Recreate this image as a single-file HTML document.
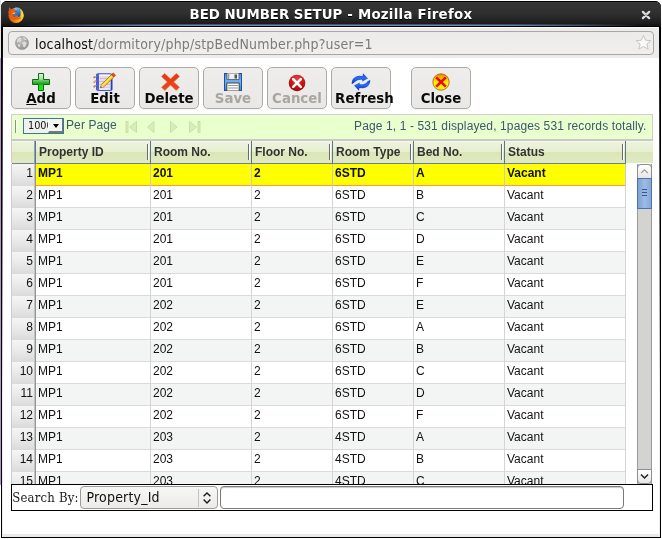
<!DOCTYPE html>
<html><head><meta charset="utf-8"><title>BED NUMBER SETUP</title>
<style>
html,body{margin:0;padding:0;}
body{width:662px;height:539px;overflow:hidden;background:#fff;position:relative;font-family:"Liberation Sans",sans-serif;}
#edgeL{position:absolute;left:0;top:58px;width:1px;height:427px;background:#b68fca;}
#edgeL2{position:absolute;left:0;top:0;width:1px;height:58px;background:#e4e4e4;}
#win{will-change:transform;position:absolute;left:1px;top:1px;width:660px;height:537px;background:#000;border-radius:6px 6px 0 0;}
#title{position:absolute;left:0;top:0;width:660px;height:25px;border-radius:6px 6px 0 0;background:linear-gradient(#000 0,#000 1px,#3e3e3e 1px,#343434 2px,#303030 12px,#272727 17px,#1d1d1d 22px,#151515 25px);color:#fff;font:bold 13.33px "DejaVu Sans","Liberation Sans",sans-serif;line-height:25px;}
#title .t{position:absolute;left:188.5px;top:0.5px;white-space:pre;text-shadow:0 1px 0 #000;}
#tline{position:absolute;left:2px;top:23px;width:656px;height:2px;background:linear-gradient(90deg,rgba(107,141,194,0) 2%,rgba(107,141,194,.55) 12%,rgba(107,141,194,.9) 22%,#6b8dc2 32%,#6b8dc2 68%,rgba(107,141,194,.9) 78%,rgba(107,141,194,.5) 88%,rgba(107,141,194,0) 97%);}
#tline:before{content:"";position:absolute;left:0;top:0;width:656px;height:1px;background:rgba(17,17,17,.45)}
#content{position:absolute;left:2px;top:25px;width:656px;height:508px;background:#fff;overflow:hidden;border-top:0;}
#content:before{content:"";position:absolute;left:0;top:0;width:656px;height:1px;background:#000}
.fr{position:absolute;top:26px;width:1px;height:510px;background:linear-gradient(#000 0%,#f0f0f0 73%,#ececeb 100%);}
#botstrip{position:absolute;left:2px;top:533px;width:656px;height:3px;background:#e9e9e8;}
#nav{position:absolute;left:0;top:1px;width:656px;height:30px;background:#edeceb;border-top:1px solid #fbfbfb;}
#url{position:absolute;left:5px;top:3px;width:644px;height:22px;border:1px solid #a9a7a3;border-radius:4px;background:linear-gradient(#ecebea,#f0efee);font:14px "DejaVu Sans Condensed","DejaVu Sans","Liberation Sans",sans-serif;line-height:22px;color:#7b7b7b;}
#url .u{position:absolute;left:26px;top:0.5px;white-space:pre;letter-spacing:0.19px}
#url b{font-weight:normal;color:#0c0c0c;}
.btn{position:absolute;top:41px;width:58px;height:40px;border:1px solid #adaba7;border-radius:5px;background:linear-gradient(#eeedec,#e9e8e7);font:bold 13.33px "DejaVu Sans","Liberation Sans",sans-serif;text-align:center;color:#0a0a0a;box-shadow:0 1px 0 #f4f4f4;}
.btn span{position:absolute;left:-10px;right:-10px;top:21.5px;line-height:17px;white-space:pre;}
.btn svg{position:absolute;}
.btn.dis{color:#a9a5a1;}
#pager{position:absolute;left:8px;top:88px;width:640px;height:24px;border:1px solid #cfcfcf;border-bottom:none;background:#eaffce;font:12px "Liberation Sans",sans-serif;color:#3a5a6c;}
#pager2{position:absolute;left:8px;top:113px;width:642px;height:2px;background:#c9c9c9;}
#hdr{position:absolute;left:8px;top:115px;width:641px;height:22px;background:linear-gradient(#f6f9ee,#ecf3dc 8%,#e5eece 49%,#dae6b7 50%,#e0eac2);border-left:1px solid #ccc;box-sizing:content-box;font:bold 12px "Liberation Sans",sans-serif;color:#333;}
#hdr span{position:absolute;top:3.5px;white-space:pre;}
#hdr u{position:absolute;left:0;top:22px;width:614px;height:1px;background:#6f8294}
#hdr i{position:absolute;top:0;width:1px;height:23px;background:#5f7489;}
#hdr em{position:absolute;top:3px;width:1px;height:16px;background:#6b6b6b;border-right:1px solid #fff;}
#body{position:absolute;left:8px;top:138px;width:642px;height:320px;overflow:hidden;font:12px "Liberation Sans",sans-serif;color:#111;border-left:1px solid #ccc;}
.row{position:absolute;left:0;width:613px;height:21px;border-bottom:1px solid #dadada;background:#fff;line-height:19px;}
.row.alt{background:#f2f5f3;}
.row.sel{background:#ff0;font-weight:bold;border-bottom:1px solid #ff9a3c;}
.row span{position:absolute;top:0;height:22px;white-space:pre;}
.row .n{left:0;width:21px;height:22px;padding-right:1px;text-align:right;background:linear-gradient(#f5f5f5,#ebebeb 45%,#dadada);border-right:1px solid #c2c2c2;font-weight:normal;}
.row .n:after{content:"";position:absolute;right:-2px;top:0;width:1px;height:22px;background:#959595}
.c{border-left:1px solid #d5d5d5;padding-left:2px;}
.sel .c{border-left-color:#c9c9c9}
.row .c1{left:24px;border-left:none;padding-left:2px}.c2{left:138px}.c3{left:239px}.c4{left:320px}.c5{left:401px}.c6{left:492px}.c7{left:613px;width:0;padding:0}
#sb{position:absolute;left:634px;top:138px;width:15px;height:320px;background:#d3d3d2;border-left:1px solid #9a9a9a;border-right:1px solid #9a9a9a;box-sizing:border-box;}
#sbu,#sbd{position:absolute;left:-1px;width:13px;height:13px;border:1px solid #8d8d8d;background:linear-gradient(#fff,#e6e6e6);}
#sbu{top:0;border-radius:4px 4px 0 0;}
#sbd{bottom:0;border-radius:0 0 4px 4px;}
#sbt{position:absolute;left:-1px;top:14px;width:13px;height:29px;border:1px solid #4d72a8;background:linear-gradient(90deg,#7da2d6,#9dbbe4 50%,#86a9da);}
#sbt i{position:absolute;left:4px;width:5px;height:1px;background:#35588f;}
#search{position:absolute;left:8px;top:458px;width:640px;height:25px;border:1px solid #000;background:#fff;letter-spacing:.2px;font:13px "DejaVu Serif Condensed","DejaVu Serif","Liberation Serif",serif;color:#1a1a1a;}
#sel2{position:absolute;left:68px;top:1px;width:136px;height:21px;border:1px solid #9c9a96;border-radius:4px;background:linear-gradient(#f7f7f6,#ecebea);font:14px "DejaVu Sans Condensed","DejaVu Sans","Liberation Sans",sans-serif;letter-spacing:.18px;color:#111;line-height:21px;}
#inp{position:absolute;left:208px;top:1px;width:402px;height:21px;border:1px solid #7c7a76;box-shadow:inset 0 1px 1px #c8c8c8;border-radius:4px;background:#fff;}
#psel{position:absolute;left:11px;top:3px;width:39px;height:14px;border:1px solid #3d7890;background:#f0f0ef;font:10.8px "DejaVu Sans Condensed","DejaVu Sans","Liberation Sans",sans-serif;color:#111;line-height:14px;overflow:hidden;}
#psel .b{position:absolute;left:24px;top:0;width:13px;height:12px;background:#f4f4f3;border-right:2px solid #777;border-bottom:2px solid #777;border-left:1px solid #fff;}
#psel .b:after{content:"";position:absolute;left:4px;top:5px;border:3.5px solid transparent;border-top:4px solid #000;border-bottom:none;}

</style></head><body>
<div id="edgeL"></div><div id="edgeL2"></div>
<div id="win">
<div id="title"><span class="t">BED NUMBER SETUP<span style="letter-spacing:.27px"> - Mozilla Firefox</span></span>
<svg style="position:absolute;left:7px;top:5.5px" width="17" height="17" viewBox="0 0 17 17">
<defs><linearGradient id="fg" x1="0" y1="0.3" x2="1" y2="0.5"><stop offset="0" stop-color="#cf4a08"/><stop offset="0.4" stop-color="#ea7012"/><stop offset="0.75" stop-color="#f9a41e"/><stop offset="1" stop-color="#ffd038"/></linearGradient>
<linearGradient id="fb" x1="0.2" y1="0" x2="0.8" y2="1"><stop offset="0" stop-color="#9adcf8"/><stop offset="0.4" stop-color="#3a96e0"/><stop offset="1" stop-color="#173a92"/></linearGradient>
<radialGradient id="ft" cx="0.7" cy="0.5" r="0.6"><stop offset="0" stop-color="#ffe048"/><stop offset="1" stop-color="#f9a41e"/></radialGradient></defs>
<circle cx="8" cy="8.4" r="7.6" fill="url(#fg)"/>
<circle cx="9" cy="5.5" r="5" fill="url(#fb)"/>
<path d="M11.2 1.2 C14 2.2 15.7 5.2 15.6 8.6 C15.5 10.6 14.6 12.6 13 14 C13.4 12 13 10.6 12.3 9.6 C12.9 6.8 12.6 3.6 11.2 1.2 Z" fill="url(#ft)"/>
<path d="M1.1 0.4 L3.2 2.3 C4.2 2.6 5.1 2.3 5.6 1.7 L6.1 0.9 L6.7 2.8 L7.7 3.4 L8.7 4.3 L7.7 5 L7.2 5.9 L5.8 6.7 L4.7 7 C5.2 8.2 6.4 8.9 7.7 8.7 L9.5 8.3 L10.3 9.6 L9 10.6 C10.4 10.8 11.6 10.2 12.3 9.4 L12.6 12 L6 13 L1.4 9.6 L0.5 5.4 C0.9 4 1 2 1.1 0.4 Z" fill="#e4640e"/>
<path d="M0.6 5.2 C1 4 1.05 2 1.1 0.4 L3.2 2.3 L2.6 6.4 L1.4 9 Z" fill="#d9560a"/>
<path d="M7.6 3.5 L8.8 4.3 L7.8 5.1 Z" fill="#6a1604"/>
<path d="M4.6 5.9 L7.1 5.4 L6.7 6.4 L4.9 6.9 Z" fill="#ffdcae"/>
<path d="M4.4 7.2 C5 8.4 6.2 9.2 7.6 9 L6.4 9.8 C5.2 9.4 4.4 8.4 4.4 7.2 Z" fill="#a83404"/>
</svg>
<svg style="position:absolute;left:639.8px;top:8.9px" width="10" height="10" viewBox="0 0 10 10"><path d="M1.9 1.9 L8.1 8.1 M8.1 1.9 L1.9 8.1" stroke="#dcdcdc" stroke-width="2.3" stroke-linecap="round"/><circle cx="5" cy="5" r="1.2" fill="#b4b4b4"/></svg>
</div>
<div id="tline"></div>
<div id="content">
<div id="nav"><div id="url"><svg style="position:absolute;left:6px;top:4px" width="14" height="14" viewBox="0 0 14 14">
<defs><radialGradient id="gg" cx="0.4" cy="0.3" r="0.8"><stop offset="0" stop-color="#c4c4c4"/><stop offset="1" stop-color="#8e8e8e"/></radialGradient></defs>
<circle cx="7" cy="7" r="6.6" fill="url(#gg)" stroke="#9a9a9a" stroke-width=".6"/>
<path d="M3.2 2.2 C4.6 1.4 6 1.6 6.8 2.4 L5.6 3.8 L6.4 5 L5 6.2 L3.6 5.6 L2 6.4 C1.8 4.6 2.2 3.2 3.2 2.2 Z M7.8 1.2 C9.6 1.4 11 2.4 11.8 3.8 L10.4 4.2 L9 3.2 Z M7.2 6.4 L9.6 5.6 L11.6 6.6 L11.2 9 L9.4 11.4 L8 10.6 L8.2 8.6 L6.8 7.6 Z M3 8 L4.8 8.6 L5.2 10.6 L4 11.2 C3.2 10.4 2.8 9.2 3 8 Z" fill="#dcdcdc"/>
</svg><span class="u"><b>localhost</b>/dormitory/php/stpBedNumber.php?user=1</span><svg style="position:absolute;left:625.5px;top:2.1px" width="17" height="17" viewBox="0 0 17 17"><path d="M8.5 1.4 L10.6 6.2 L15.8 6.7 L11.9 10.1 L13.1 15.2 L8.5 12.5 L3.9 15.2 L5.1 10.1 L1.2 6.7 L6.4 6.2 Z" fill="#f9f9f9" stroke="#c6c5c3" stroke-width="1" stroke-linejoin="round"/></svg></div></div>
<div class="btn" style="left:8px"><svg style="left:20px;top:5px" width="18" height="18" viewBox="0 0 18 18">
<defs><linearGradient id="ga" x1="0" y1="0" x2="0" y2="1"><stop offset="0" stop-color="#e4f2e4"/><stop offset="0.33" stop-color="#a8dca8"/><stop offset="0.4" stop-color="#6ccc6c"/><stop offset="0.62" stop-color="#1a9a1a"/><stop offset="0.7" stop-color="#22d822"/><stop offset="1" stop-color="#12ee12"/></linearGradient></defs>
<path d="M6.5 0.5 H11.5 V6.5 H17.5 V11.5 H11.5 V17.5 H6.5 V11.5 H0.5 V6.5 H6.5 Z" fill="url(#ga)" stroke="#0a6e0a" stroke-width="1" stroke-linejoin="round"/>
</svg><span><u>A</u>dd</span></div>
<div class="btn" style="left:72px"><svg style="left:17px;top:4px" width="24" height="20" viewBox="0 0 24 20">
<rect x="3.5" y="1.8" width="15.4" height="16.6" rx="1.2" fill="#fbfbff" stroke="#3448c4" stroke-width="1"/>
<rect x="3.5" y="1.8" width="2.6" height="16.6" fill="#4a6ae0"/>
<rect x="17.6" y="2.6" width="1.6" height="15.8" fill="#2a3cb8"/>
<path d="M6.5 5 H17.5 M6.5 8 H17.5 M6.5 11 H17.5 M6.5 14 H17.5" stroke="#f0a8a8" stroke-width=".9"/>
<path d="M6.5 6.5 H17.5 M6.5 9.5 H17.5 M6.5 12.5 H17.5 M6.5 15.8 H17.5" stroke="#a4bcf4" stroke-width=".9"/>
<path d="M1.2 5.4 C2.4 4.2 4 4.6 5 5.8 M1.2 10 C2.4 8.8 4 9.2 5 10.4 M1.2 14.6 C2.4 13.4 4 13.8 5 15" stroke="#5a48c0" stroke-width="1.5" fill="none" stroke-linecap="round"/><path d="M1.6 5 L3 4.6 M1.6 9.6 L3 9.2 M1.6 14.2 L3 13.8" stroke="#f4c020" stroke-width="1.2" stroke-linecap="round"/>
<path d="M7.4 15.8 L8.6 12.4 L18.4 2.6 L20.8 5 L11 14.8 Z" fill="#f8d820" stroke="#a86c10" stroke-width=".8"/>
<path d="M9.6 13.6 L19.4 3.8" stroke="#fff08a" stroke-width=".9"/>
<path d="M18.4 2.6 L20.2 0.9 L22.6 3.2 L20.8 5 Z" fill="#e8502a" stroke="#a03010" stroke-width=".6"/>
<path d="M7.4 15.8 L8.6 12.4 L11 14.8 Z" fill="#f0d0a0"/>
<path d="M7.4 15.8 L7.9 14.3 L8.9 15.3 Z" fill="#222"/>
</svg><span>Edit</span></div>
<div class="btn" style="left:136px"><svg style="left:21px;top:5px" width="19" height="18" viewBox="0 0 19 18">
<defs><linearGradient id="gd" x1="0" y1="0" x2="0" y2="1"><stop offset="0" stop-color="#e83808"/><stop offset="1" stop-color="#e84a20"/></linearGradient></defs>
<path d="M3.6 0.6 L9.5 6 L15.4 0.6 L18.4 3.6 L12.6 9 L18.4 14.2 L15.2 17.4 L9.5 12 L3.8 17.4 L0.6 14.2 L6.4 9 L0.6 3.6 Z" fill="url(#gd)" stroke="#e86040" stroke-width=".6" stroke-linejoin="round"/>
</svg><span>Delete</span></div>
<div class="btn dis" style="left:200px"><svg style="left:20px;top:5px" width="18" height="18" viewBox="0 0 18 18">
<defs><linearGradient id="gs" x1="0" y1="0" x2="0" y2="1"><stop offset="0" stop-color="#4a90dc"/><stop offset="0.5" stop-color="#6cb4f0"/><stop offset="1" stop-color="#4088d4"/></linearGradient></defs>
<rect x="0.5" y="0.5" width="17" height="17" fill="url(#gs)" stroke="#1c50a8" stroke-width="1"/>
<rect x="3" y="0" width="12" height="6.5" fill="#f0f0f0" stroke="#555" stroke-width=".8"/>
<rect x="10.5" y="1.5" width="2.5" height="4" fill="#555"/>
<rect x="4.2" y="1" width="1" height="5" fill="#888"/>
<rect x="2.8" y="10" width="12.4" height="8" fill="#fafafa" stroke="#444" stroke-width="1"/>
<path d="M4 12.5 H14 M4 15 H14" stroke="#999" stroke-width="1"/>
</svg><span>Save</span></div>
<div class="btn dis" style="left:264px"><svg style="left:20px;top:5.5px" width="18" height="18" viewBox="0 0 18 18">
<defs><radialGradient id="gc" cx="0.5" cy="0.25" r="0.8"><stop offset="0" stop-color="#e84040"/><stop offset="0.6" stop-color="#c81010"/><stop offset="1" stop-color="#980000"/></radialGradient></defs>
<circle cx="9" cy="9" r="8.3" fill="url(#gc)"/>
<path d="M5.2 5.2 L12.8 12.8 M12.8 5.2 L5.2 12.8" stroke="#fff" stroke-width="2.6" stroke-linecap="round"/>
</svg><span>Cancel</span></div>
<div class="btn" style="left:328px"><svg style="left:19px;top:4.5px" width="20" height="18" viewBox="0 0 20 18">
<defs><linearGradient id="gr" x1="0" y1="0" x2="0" y2="1"><stop offset="0" stop-color="#1446d8"/><stop offset="0.45" stop-color="#2b6cf2"/><stop offset="1" stop-color="#0e2eb0"/></linearGradient></defs>
<path d="M0.8 11 C0.4 6.4 3.6 2.8 8.4 2.8 L11.6 3 L12 0.3 L17 5.4 L11.2 8.6 L11.4 7 C8.6 6.4 6 7 4.2 8.8 C3 10 1.8 11 0.8 11 Z" fill="url(#gr)"/>
<path d="M19.2 7 C19.6 11.6 16.4 15.2 11.6 15.2 L8.4 15 L8 17.7 L3 12.6 L8.8 9.4 L8.6 11 C11.4 11.6 14 11 15.8 9.2 C17 8 18.2 7 19.2 7 Z" fill="url(#gr)"/>
</svg><span style="left:3px;right:auto;letter-spacing:.12px">Refresh</span></div>
<div class="btn" style="left:408px"><svg style="left:20px;top:4.8px" width="18" height="18" viewBox="0 0 18 18">
<defs><linearGradient id="gx" x1="0" y1="0" x2="0" y2="1"><stop offset="0" stop-color="#ee8200"/><stop offset="0.3" stop-color="#f6c400"/><stop offset="0.55" stop-color="#fcf200"/><stop offset="1" stop-color="#fcf000"/></linearGradient></defs>
<circle cx="9" cy="9" r="8.2" fill="url(#gx)" stroke="#b4681a" stroke-width=".9"/>
<path d="M4.2 4.4 L13.8 13.6 M13.8 4.4 L4.2 13.6" stroke="#e60e0e" stroke-width="2.7" stroke-linecap="butt"/>
</svg><span>Close</span></div>
<div id="pager">
<span style="position:absolute;left:3px;top:5px;width:1px;height:13px;background:#8f8f8f;border-right:1px solid #fff"></span>
<div id="psel"><span style="position:absolute;left:4px;top:0">1000</span><div class="b"></div></div>
<span style="position:absolute;left:54px;top:3.2px;letter-spacing:.1px">Per Page</span>
<svg style="position:absolute;left:112px;top:6px" width="80" height="13" viewBox="0 0 80 13">
<g fill="#d9edbb" stroke="#c0dc9a" stroke-width=".8">
<rect x="2" y="0.5" width="2" height="11"/><path d="M12.5 0.5 L12.5 11.5 L5.5 6 Z"/>
<path d="M30 0.5 L30 11.5 L23.5 6 Z"/>
<path d="M46.5 0.5 L46.5 11.5 L53 6 Z"/>
<path d="M65.5 0.5 L65.5 11.5 L72.5 6 Z"/><rect x="74" y="0.5" width="2" height="11"/>
</g></svg>
<span style="position:absolute;right:5.5px;top:4.2px;white-space:pre;letter-spacing:.12px">Page 1, 1 - 531 displayed, 1pages 531 records totally.</span></div>
<div id="pager2"></div>
<div id="hdr"><u></u>
<i style="left:22px;background:#93a3b4"></i><i style="left:23px"></i><span style="left:27px">Property ID</span><em style="left:135px"></em>
<i style="left:138px"></i><span style="left:142px">Room No.</span><em style="left:236px"></em>
<i style="left:239px"></i><span style="left:243px">Floor No.</span><em style="left:317px"></em>
<i style="left:320px"></i><span style="left:324px">Room Type</span><em style="left:398px"></em>
<i style="left:401px"></i><span style="left:405px">Bed No.</span><em style="left:489px"></em>
<i style="left:492px"></i><span style="left:496px">Status</span><em style="left:610px"></em>
<i style="left:613px"></i>
</div>
<div id="body">
<div class="row sel" style="top:0px"><span class="n">1</span><span class="c c1">MP1</span><span class="c c2">201</span><span class="c c3">2</span><span class="c c4">6STD</span><span class="c c5">A</span><span class="c c6">Vacant</span><span class="c c7"></span></div>
<div class="row" style="top:22px"><span class="n">2</span><span class="c c1">MP1</span><span class="c c2">201</span><span class="c c3">2</span><span class="c c4">6STD</span><span class="c c5">B</span><span class="c c6">Vacant</span><span class="c c7"></span></div>
<div class="row alt" style="top:44px"><span class="n">3</span><span class="c c1">MP1</span><span class="c c2">201</span><span class="c c3">2</span><span class="c c4">6STD</span><span class="c c5">C</span><span class="c c6">Vacant</span><span class="c c7"></span></div>
<div class="row" style="top:66px"><span class="n">4</span><span class="c c1">MP1</span><span class="c c2">201</span><span class="c c3">2</span><span class="c c4">6STD</span><span class="c c5">D</span><span class="c c6">Vacant</span><span class="c c7"></span></div>
<div class="row alt" style="top:88px"><span class="n">5</span><span class="c c1">MP1</span><span class="c c2">201</span><span class="c c3">2</span><span class="c c4">6STD</span><span class="c c5">E</span><span class="c c6">Vacant</span><span class="c c7"></span></div>
<div class="row" style="top:110px"><span class="n">6</span><span class="c c1">MP1</span><span class="c c2">201</span><span class="c c3">2</span><span class="c c4">6STD</span><span class="c c5">F</span><span class="c c6">Vacant</span><span class="c c7"></span></div>
<div class="row alt" style="top:132px"><span class="n">7</span><span class="c c1">MP1</span><span class="c c2">202</span><span class="c c3">2</span><span class="c c4">6STD</span><span class="c c5">E</span><span class="c c6">Vacant</span><span class="c c7"></span></div>
<div class="row" style="top:154px"><span class="n">8</span><span class="c c1">MP1</span><span class="c c2">202</span><span class="c c3">2</span><span class="c c4">6STD</span><span class="c c5">A</span><span class="c c6">Vacant</span><span class="c c7"></span></div>
<div class="row alt" style="top:176px"><span class="n">9</span><span class="c c1">MP1</span><span class="c c2">202</span><span class="c c3">2</span><span class="c c4">6STD</span><span class="c c5">B</span><span class="c c6">Vacant</span><span class="c c7"></span></div>
<div class="row" style="top:198px"><span class="n">10</span><span class="c c1">MP1</span><span class="c c2">202</span><span class="c c3">2</span><span class="c c4">6STD</span><span class="c c5">C</span><span class="c c6">Vacant</span><span class="c c7"></span></div>
<div class="row alt" style="top:220px"><span class="n">11</span><span class="c c1">MP1</span><span class="c c2">202</span><span class="c c3">2</span><span class="c c4">6STD</span><span class="c c5">D</span><span class="c c6">Vacant</span><span class="c c7"></span></div>
<div class="row" style="top:242px"><span class="n">12</span><span class="c c1">MP1</span><span class="c c2">202</span><span class="c c3">2</span><span class="c c4">6STD</span><span class="c c5">F</span><span class="c c6">Vacant</span><span class="c c7"></span></div>
<div class="row alt" style="top:264px"><span class="n">13</span><span class="c c1">MP1</span><span class="c c2">203</span><span class="c c3">2</span><span class="c c4">4STD</span><span class="c c5">A</span><span class="c c6">Vacant</span><span class="c c7"></span></div>
<div class="row" style="top:286px"><span class="n">14</span><span class="c c1">MP1</span><span class="c c2">203</span><span class="c c3">2</span><span class="c c4">4STD</span><span class="c c5">B</span><span class="c c6">Vacant</span><span class="c c7"></span></div>
<div class="row alt" style="top:308px"><span class="n">15</span><span class="c c1">MP1</span><span class="c c2">203</span><span class="c c3">2</span><span class="c c4">4STD</span><span class="c c5">C</span><span class="c c6">Vacant</span><span class="c c7"></span></div>
</div>
<div id="sb"><div id="sbu"><svg width="13" height="13" style="position:absolute;left:0;top:0"><path d="M3.2 8 L6.5 4.8 L9.8 8" fill="none" stroke="#9c9c9c" stroke-width="1.1"/></svg></div><div id="sbt"><i style="top:10px"></i><i style="top:13px"></i><i style="top:16px"></i></div><div id="sbd"><svg width="13" height="13" style="position:absolute;left:0;top:0"><path d="M3 4.5 L6.5 8 L10 4.5" fill="none" stroke="#222" stroke-width="1.5"/></svg></div></div>
<div id="search"><span style="position:absolute;left:0.2px;top:4.5px;white-space:pre">Search By:</span>
<div id="sel2"><span style="position:absolute;left:5.5px;top:0">Property_Id</span><span style="position:absolute;left:117px;top:2px;width:1px;height:18px;background:#c4c3c0"></span><svg width="12" height="16" style="position:absolute;left:120px;top:3px"><path d="M2.6 6.2 L6 2.9 L9.4 6.2 M2.6 9.6 L6 12.9 L9.4 9.6" fill="none" stroke="#1a1a1a" stroke-width="1.4"/></svg></div>
<div id="inp"></div>
</div>
</div>
<div class="fr" style="left:1px"></div><div class="fr" style="left:658px"></div>
<div id="botstrip"></div>
</div>
</body></html>
